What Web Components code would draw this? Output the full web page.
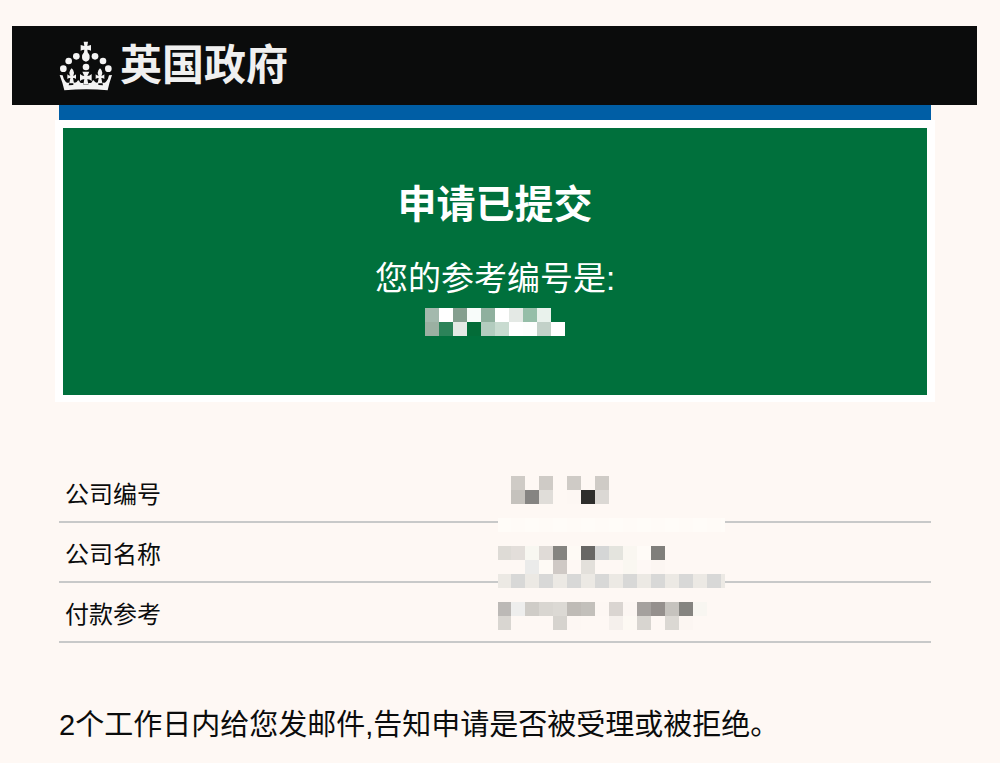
<!DOCTYPE html>
<html lang="zh-CN">
<head>
<meta charset="utf-8">
<title>申请已提交</title>
<style>
  body {
    margin: 0;
    padding: 26px 23px 20px 12px;
    background: #fef8f4;
    color: #0b0c0c;
    font-family: "Liberation Sans", "Noto Sans CJK SC", sans-serif;
  }
</style>
</head>
<body>
<confirmation-page>
  <gov-header slot="header">英国政府</gov-header>
  <gov-panel heading="申请已提交">
    您的参考编号是:
    <mosaic-block slot="value" rows="a3b9ad ffffff 859f8f f8fcfa 8fb09e ffffff e4e9e5 95bea8 e9f2ec -/9bb0a2 2c8359 e4e9e5 036c38 b3ccbf c8dbd0 ffffff fdfefd c2d1c8 ffffff"></mosaic-block>
  </gov-panel>
  <summary-table></summary-table>
  <p>2个工作日内给您发邮件,告知申请是否被受理或被拒绝。</p>
</confirmation-page>

<script>
function shadow(el, html) {
  const temp = document.createElement('template');
  temp.innerHTML = html;
  el.attachShadow({mode: 'open'}).appendChild(temp.content.cloneNode(true));
}

// Hidden values: rows split by "/", one hex colour per 14px cell, "-" is empty
const CELL = 14;

class MosaicBlock extends HTMLElement {
  constructor() {
    super();
    const rows = this.getAttribute('rows').split('/').map(r => r.trim().split(/\s+/));
    // trim: how much of the first column is cut off
    const trim = Number(this.getAttribute('trim') || 0);
    const width = Number(this.getAttribute('width') || rows[0].length * CELL);
    let rects = '';
    rows.forEach((row, y) => {
      row.forEach((color, x) => {
        if (color === '-') return;
        rects += `<rect x="${x * CELL}" y="${y * CELL}" width="${CELL}" height="${CELL}" fill="#${color}"/>`;
      });
    });
    const height = rows.length * CELL;
    shadow(this, `
      <style>
        :host { display: inline-block; vertical-align: top; }
        svg { display: block; }
      </style>
      <svg width="${width}" height="${height}" viewBox="${trim} 0 ${width} ${height}" shape-rendering="crispEdges" aria-hidden="true">${rects}</svg>
    `);
  }
}

// Black bar with the crown
class GovHeader extends HTMLElement {
  constructor() {
    super();
    shadow(this, `
      <style>
        :host { display: block; background: #0b0c0c; color: #f0f0f0; }
        header {
          display: flex;
          align-items: center;
          gap: 8px;
          height: 79px;
          padding-left: 47px;
          font-size: 42px;
          font-weight: 700;
          line-height: 56px;
        }
        svg { flex: none; margin-top: 1px; }
      </style>
      <header>
        <svg width="53" height="50" viewBox="12 12 159 150" fill="#f4f4f4" aria-hidden="true">
          <path d="M86 14h13l-2 13q5-1 11-3v17q-6-3-11-3l1 8q6 6 6 15 0 11-11 13-12-2-12-13 0-9 6-15l1-8q-6 0-11 3V24q6 2 11 3z"/>
          <circle cx="64" cy="58" r="10"/>
          <circle cx="120" cy="58" r="10"/>
          <circle cx="41" cy="72" r="10"/>
          <circle cx="144" cy="72" r="10"/>
          <circle cx="25" cy="95" r="10"/>
          <circle cx="160" cy="95" r="10"/>
          <circle cx="93" cy="90" r="10"/>
          <!-- band and side points -->
          <path d="M14 114l9 1q2 12 9 19 5 5 11 3l-2 8q51-5 103 0l-2-8q6 2 11-3 7-7 9-19l9-1q-8 23-13 46-63-6-130 0-5-23-14-46z"/>
          <!-- fleurs -->
          <path d="M50 94q7 6 7 13 0 5-3 9 6 0 9-4v14q-4-4-9-3l3 16H43l3-16q-5-1-9 3v-14q3 4 9 4-3-4-3-9 0-7 7-13z"/>
          <path d="M135 94q7 6 7 13 0 5-3 9 6 0 9-4v14q-4-4-9-3l3 16h-14l3-16q-5-1-9 3v-14q3 4 9 4-3-4-3-9 0-7 7-13z"/>
          <!-- centre cross -->
          <path d="M82 104h21l-6 13q7 0 13-6v21q-6-6-13-5l3 15H85l3-15q-7-1-13 5v-21q6 6 13 6z"/>
          <path d="M55 136q9 4 14-6l4 1q0 8 12 7v6H55zM130 136q-9 4-14-6l-4 1q0 8-12 7v6h30z"/>
        </svg>
        <slot></slot>
      </header>
    `);
  }
}

// Green confirmation panel
class GovPanel extends HTMLElement {
  constructor() {
    super();
    shadow(this, `
      <style>
        :host {
          display: block;
          border: 8px solid #fff;
          border-bottom-width: 7px;
          background: #00703c;
          color: #fff;
          text-align: center;
        }
        section { padding: 53px 24px 59px; }
        h1 { margin: 0 0 30px; font-size: 39px; line-height: 48px; font-weight: 700; }
        .body { font-size: 33px; line-height: 40px; }
        .value { margin-top: 9px; }
      </style>
      <section>
        <h1></h1>
        <div class="body"><slot></slot></div>
        <div class="value"><slot name="value"></slot></div>
      </section>
    `);
    this.shadowRoot.querySelector('h1').textContent = this.getAttribute('heading');
  }
}

class SummaryTable extends HTMLElement {
  constructor() {
    super();
    const labels = ['公司编号', '公司名称', '付款参考'];
    const light = 'fffcf8 fffbf7 fffcf8 fffbf7 fffcf8 fffbf7 fffcf8 fffbf7 fffcf8 fffbf7 fffcf8 fffbf7 fffcf8 fffbf7 fffcf8 fffbf7 fffcf8';
    const strip = 'ece9e4 d8d8d7 ece9e4 d8d8d7 ece9e4 d8d8d7 ece9e4 d8d8d7 ece9e4 d8d8d7 ece9e4 d8d8d7 ece9e4 d8d8d7 ece9e4 d8d8d7 ece9e4';
    const cells = [
      '- cfcbc6 - cfcbc6 - cfcbc6 - cfcbc6',
      '- c5c2bd 858482 e0ddd9 - fdf7f3 2e2e2c dbd8d4',
      '-',
      light,
      '-',
      'dedbd6 e3deda f8f7f1 e0dbd7 858480 fefaf5 686765 d5d6d6 e4e4de faf7f1 fffbf7 807f7b',
      '- - ebebea fefaf5 cfc9c5 - e3e0db - - faf7f1 fef8f5 fcf6f2',
      strip,
      '-',
      'bcb9b6 eeeeed cfccc7 d9d6d1 dcd9d4 bfbbb6 c3c0bb fdf7f3 dad5d1 fcf6f2 a5a19e 95908d c6c3be 858480 f8f6f1',
      'd9d6d1 - - - d6d3ce fdf7f3 - - f5f0ec fdf9f3 d8d5d0 - dbd8d3 fcf6f2'
    ].join('/');
    shadow(this, `
      <style>
        :host { display: block; position: relative; }
        table { width: 100%; border-collapse: separate; border-spacing: 0; table-layout: fixed; }
        th, td {
          box-sizing: border-box;
          height: 60px;
          padding: 6px 6px 0;
          border-bottom: 2px solid #c8c9c9;
          font-size: 24px;
          line-height: 32px;
          font-weight: 400;
          text-align: left;
        }
        /* lies over the row lines */
        mosaic-block { position: absolute; top: 13px; left: calc(50% + 3px); }
      </style>
      <table>
        ${labels.map(l => `<tr><th scope="row">${l}</th><td></td></tr>`).join('')}
      </table>
      <mosaic-block trim="1" width="227" rows="${cells}"></mosaic-block>
    `);
  }
}

class ConfirmationPage extends HTMLElement {
  constructor() {
    super();
    shadow(this, `
      <style>
        :host { display: block; }
        main { padding: 0 46px 0 47px; }
        .bar { height: 15px; background: #005ea5; }
        ::slotted(gov-panel) { margin: 0 -4px 61px; }
        ::slotted(p) { margin: 62px 0 0; font-size: 29px; line-height: 40px; }
      </style>
      <slot name="header"></slot>
      <main>
        <div class="bar"></div>
        <slot></slot>
      </main>
    `);
  }
}

window.customElements.define('mosaic-block', MosaicBlock);
window.customElements.define('gov-header', GovHeader);
window.customElements.define('gov-panel', GovPanel);
window.customElements.define('summary-table', SummaryTable);
window.customElements.define('confirmation-page', ConfirmationPage);
</script>
</body>
</html>
